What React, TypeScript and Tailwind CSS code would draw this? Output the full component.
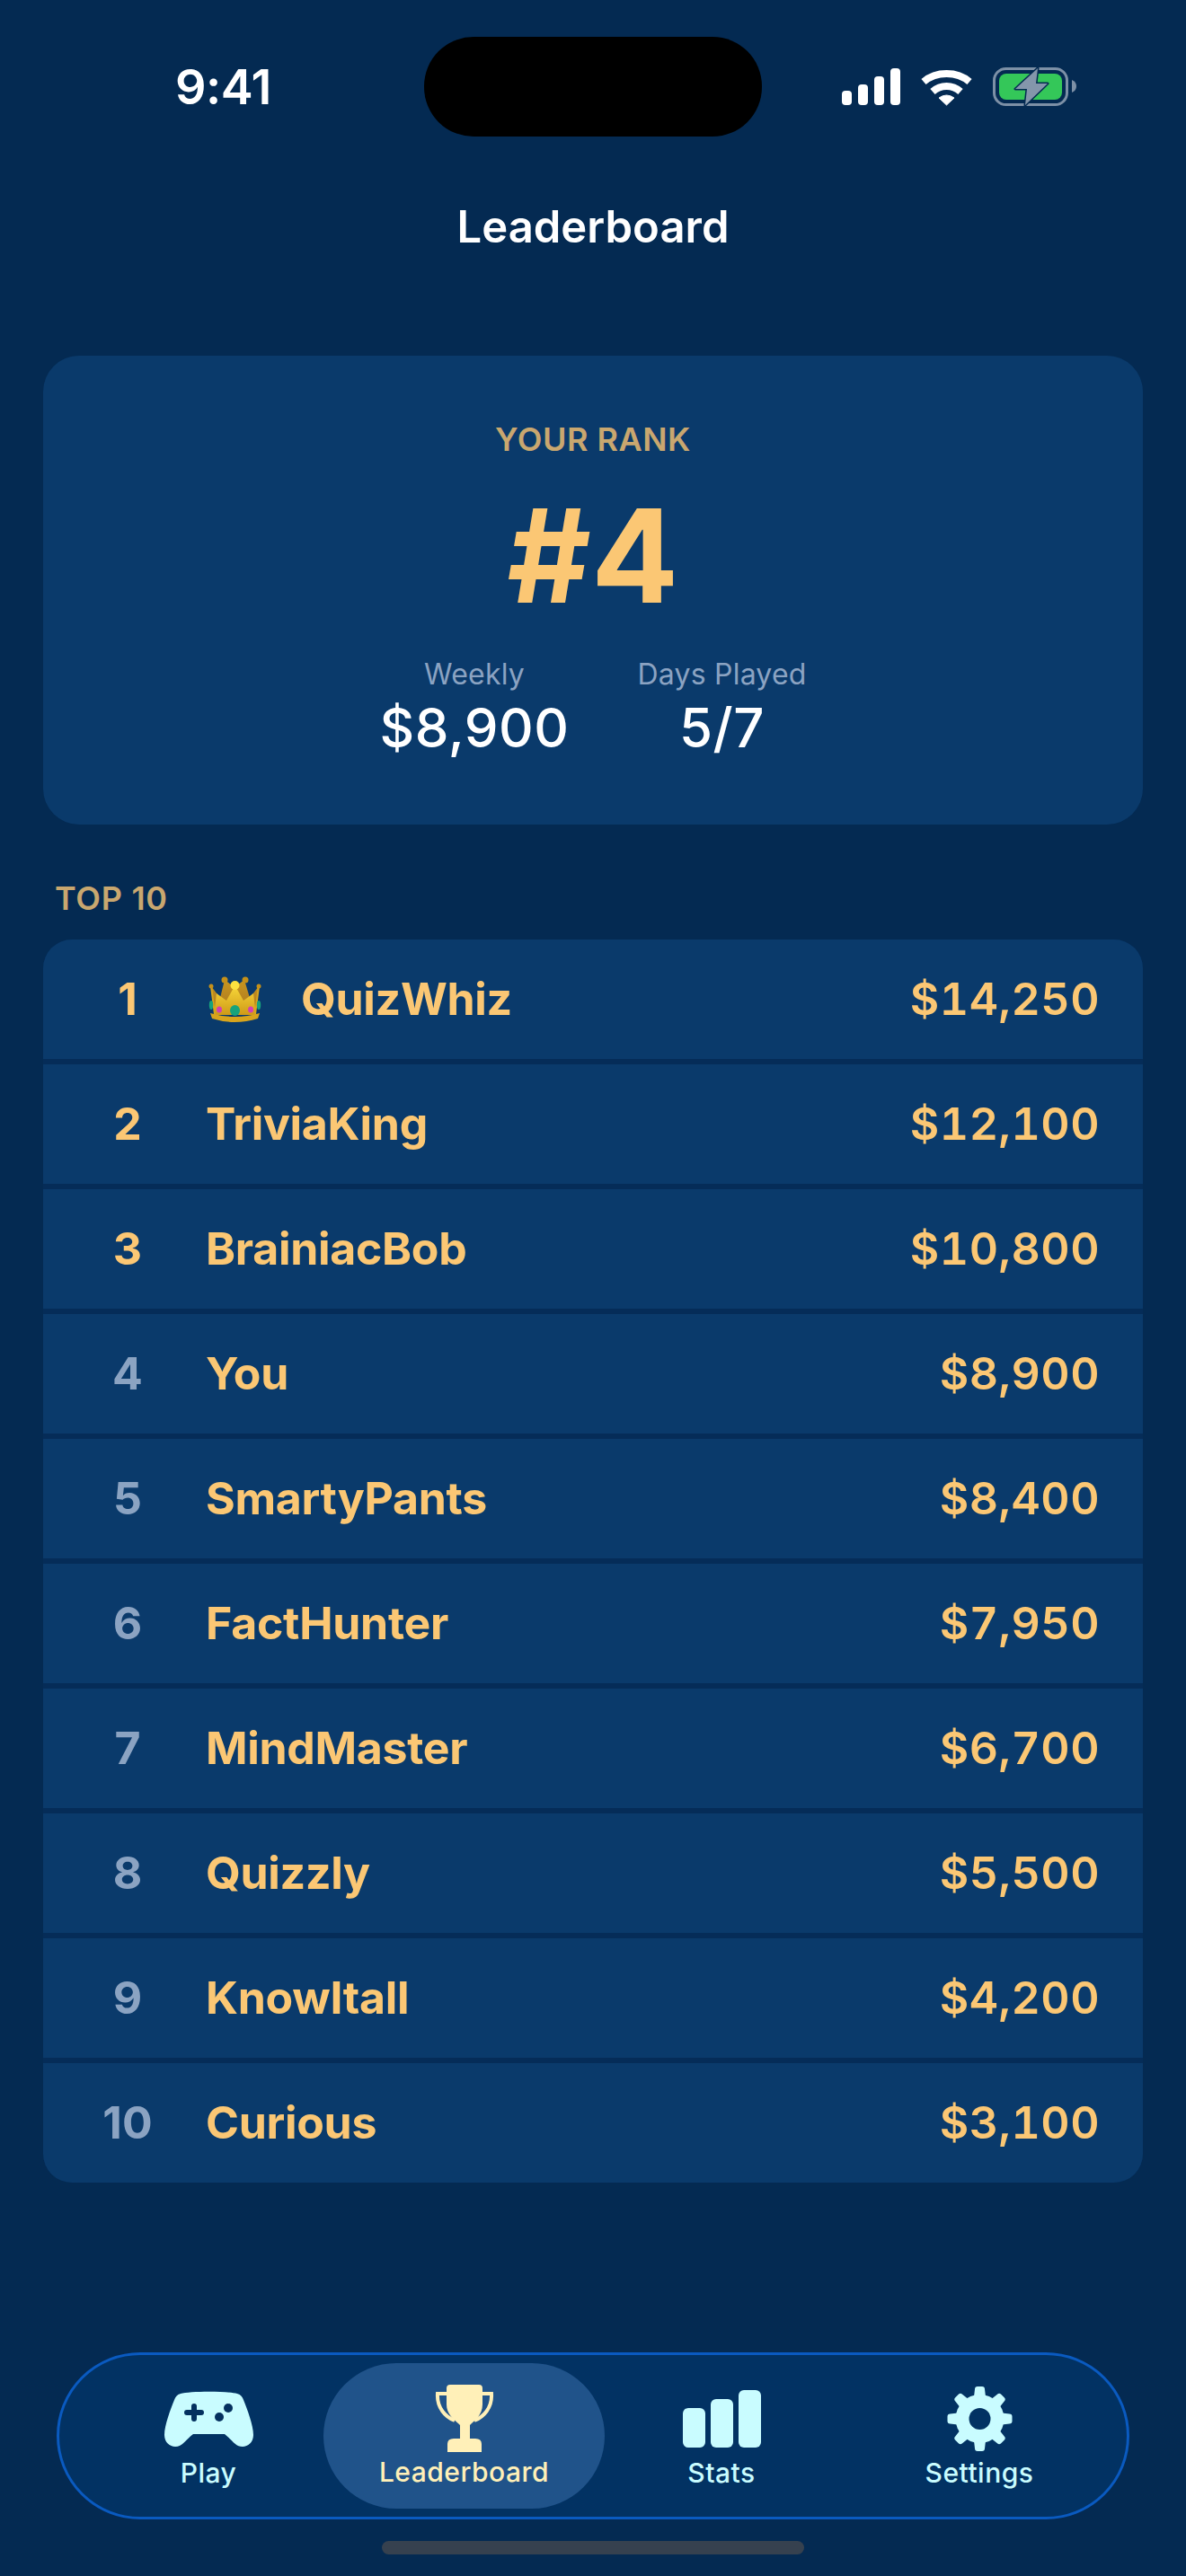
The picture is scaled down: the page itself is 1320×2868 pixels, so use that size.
const rows = [
  { rank: 1, name: "QuizWhiz", amount: "$14,250", top: true, crown: true },
  { rank: 2, name: "TriviaKing", amount: "$12,100", top: true },
  { rank: 3, name: "BrainiacBob", amount: "$10,800", top: true },
  { rank: 4, name: "You", amount: "$8,900" },
  { rank: 5, name: "SmartyPants", amount: "$8,400" },
  { rank: 6, name: "FactHunter", amount: "$7,950" },
  { rank: 7, name: "MindMaster", amount: "$6,700" },
  { rank: 8, name: "Quizzly", amount: "$5,500" },
  { rank: 9, name: "KnowItall", amount: "$4,200" },
  { rank: 10, name: "Curious", amount: "$3,100" },
];

function SignalIcon() {
  return (
    <svg width="65" height="41" viewBox="0 0 65 41" fill="#fff">
      <rect x="0" y="25" width="11" height="16" rx="4" />
      <rect x="18" y="18" width="11" height="23" rx="4" />
      <rect x="36" y="9" width="11" height="32" rx="4" />
      <rect x="54" y="0" width="11" height="41" rx="4" />
    </svg>
  );
}

function WifiIcon() {
  return (
    <svg width="57" height="42" viewBox="0 0 57 42" fill="none" stroke="#fff" strokeWidth="8">
      <path d="M3 15C17 3 40 3 54 15" />
      <path d="M13 26C22 18 35 18 44 26" />
      <path d="M28.5 41L20 33Q28.5 27 37 33Z" fill="#fff" stroke="#fff" strokeWidth="1" strokeLinejoin="round" />
    </svg>
  );
}

function BatteryIcon() {
  return (
    <svg width="93" height="43" viewBox="0 0 93 43" fill="none">
      <rect x="1.5" y="1.5" width="81" height="40" rx="13" stroke="#7d90a6" strokeWidth="3" />
      <rect x="7" y="7" width="70" height="29" rx="8" fill="#34c759" />
      <path d="M88 14Q93 16 93 21Q93 26 88 28Z" fill="#7d90a6" />
      <path
        d="M50 1L25 24H38L36 42L61 18H48Z"
        fill="#8496ab"
        stroke="#042a52"
        strokeWidth="3"
        strokeLinejoin="round"
        paintOrder="stroke"
      />
    </svg>
  );
}

function GamepadIcon() {
  return (
    <svg width="99" height="62" viewBox="0 0 99 62">
      <path
        d="M18 3C28 0 71 0 81 3C85 4 87 7 88 10C92 20 99 38 99 49C99 57 93 62 87 62C79 62 75 54 67 48H32C24 54 20 62 12 62C6 62 0 57 0 49C0 38 7 20 11 10C12 7 14 4 18 3Z"
        fill="#c9fcff"
      />
      <path d="M33 17V31M25 24H41" stroke="#04305f" strokeWidth="6" strokeLinecap="round" />
      <circle cx="71" cy="19" r="5" fill="#04305f" />
      <circle cx="61" cy="29" r="5" fill="#04305f" />
    </svg>
  );
}

function TrophyIcon() {
  return (
    <svg width="66" height="75" viewBox="0 0 66 75">
      <path d="M13 10H3C2 26 12 36 22 40M53 10H63C64 26 54 36 44 40" fill="none" stroke="#fff0b8" strokeWidth="4" />
      <path
        d="M13 4Q13 0 17 0H49Q53 0 53 4V22C53 34 44 40 39 45V60H45Q52 60 52 66V75H14V66Q14 60 21 60H28V45C23 40 13 34 13 22Z"
        fill="#fff0b8"
      />
    </svg>
  );
}

function StatsIcon() {
  return (
    <svg width="87" height="64" viewBox="0 0 87 64" fill="#c9fcff">
      <rect x="0" y="20" width="25" height="44" rx="6" />
      <rect x="31" y="10" width="25" height="54" rx="6" />
      <rect x="62" y="0" width="25" height="64" rx="6" />
    </svg>
  );
}

function GearIcon() {
  return (
    <svg width="73" height="72" viewBox="0 0 73 72">
      <g fill="#c9fcff">
        <circle cx="36.5" cy="36" r="27" />
        {[0, 45, 90, 135, 180, 225, 270, 315].map((angle) => (
          <path
            key={angle}
            d="M29 20L31 3Q31 0 34 0H39Q42 0 42 3L44 20Z"
            transform={`rotate(${angle} 36.5 36)`}
          />
        ))}
      </g>
      <circle cx="36.5" cy="36" r="12" fill="#023263" />
    </svg>
  );
}

function CrownIcon() {
  return (
    <svg width="59" height="51" viewBox="0 0 59 51">
      <defs>
        <linearGradient id="crownGold" x1="0" y1="0" x2="0" y2="1">
          <stop offset="0" stopColor="#f8d83a" />
          <stop offset="1" stopColor="#cf9a18" />
        </linearGradient>
        <linearGradient id="crownBack" x1="0" y1="0" x2="0" y2="1">
          <stop offset="0" stopColor="#c8961f" />
          <stop offset="1" stopColor="#a87420" />
        </linearGradient>
      </defs>
      <path d="M3 11L7 42H52L56 11L46 24L40 4L29 12L18 4L13 24Z" fill="url(#crownBack)" />
      <path d="M29.5 10L39 27L50 19L53 43H6L9 19L20 27Z" fill="url(#crownGold)" />
      <path d="M3 11L7 42M56 11L52 42" stroke="#d6a41f" strokeWidth="2" />
      <circle cx="18" cy="4" r="3.5" fill="#c4901a" />
      <circle cx="41" cy="4" r="3.5" fill="#c4901a" />
      <circle cx="3" cy="11" r="2.5" fill="#c4901a" />
      <circle cx="56" cy="11" r="2.5" fill="#c4901a" />
      <circle cx="29.5" cy="10" r="5" fill="#fde23f" />
      <path d="M2 41Q29.5 49 57 41L55 47Q29.5 55 4 47Z" fill="#d8a41c" />
      <ellipse cx="29.5" cy="38" rx="5.5" ry="6" fill="#17a37c" />
      <ellipse cx="12" cy="37" rx="3" ry="3.5" fill="#d33fb2" />
      <ellipse cx="47" cy="37" rx="3" ry="3.5" fill="#d33fb2" />
      <ellipse cx="3" cy="32" rx="2.2" ry="5" fill="#17a37c" />
      <ellipse cx="56" cy="32" rx="2.2" ry="5" fill="#17a37c" />
    </svg>
  );
}

export default function App() {
  return (
    <div className="w-[1320px] h-[2868px] flex flex-col bg-[#042a52] font-['Inter',sans-serif] text-white overflow-hidden">
      <div className="flex items-center mt-[41px] h-[111px]">
        <div className="w-[472px] pl-[195px] text-[54px] leading-none font-semibold tracking-[-0.5px]">9:41</div>
        <div className="w-[376px] h-[111px] rounded-[55px] bg-black" />
        <div className="w-[472px] pl-[89px] flex items-center gap-[23px]">
          <SignalIcon />
          <WifiIcon />
          <BatteryIcon />
        </div>
      </div>

      <h1 className="mt-[71px] h-[60px] leading-[60px] text-center text-[49px] font-semibold">Leaderboard</h1>

      <section className="mt-[113px] mx-[48px] h-[522px] rounded-[40px] bg-[#0a3a6b] flex flex-col items-center pt-[73px]">
        <p className="text-[36px] leading-[40px] font-semibold text-[#c9a76f] tracking-[0.5px]">YOUR RANK</p>
        <p className="mt-[25px] text-[144px] leading-[170px] font-bold text-[#fbc774]">#4</p>
        <div className="flex justify-center gap-[76px] mt-[27px]">
          <div className="flex flex-col items-center">
            <span className="text-[32px] leading-[40px] text-[#8ba3c2] tracking-[0.2px]">Weekly</span>
            <span className="mt-[4px] text-[60px] leading-[70px] font-medium tracking-[0.5px]">$8,900</span>
          </div>
          <div className="flex flex-col items-center">
            <span className="text-[32px] leading-[40px] text-[#8ba3c2] tracking-[0.2px]">Days Played</span>
            <span className="mt-[4px] text-[60px] leading-[70px] font-medium tracking-[0.5px]">5/7</span>
          </div>
        </div>
      </section>

      <h2 className="mt-[60px] mb-[24px] ml-[61px] text-[36px] leading-[44px] font-semibold text-[#c9a76f] tracking-[0.7px]">TOP 10</h2>

      <div className="mx-[48px] rounded-[32px] overflow-hidden flex flex-col gap-[6px] bg-[#052c58]">
        {rows.map((row) => (
          <div key={row.rank} className="h-[133px] shrink-0 flex items-center bg-[#0a3a6b] pl-[33px] pr-[48px]">
            <span
              className={`w-[122px] text-center text-[50px] font-bold ${row.top ? "text-[#fbc774]" : "text-[#8ba3c2]"}`}
            >
              {row.rank}
            </span>
            <span className="ml-[26px] flex items-center text-[50px] font-bold text-[#fbc774] tracking-[-0.3px]">
              {row.crown && (
                <span className="ml-[3px] mr-[44px]">
                  <CrownIcon />
                </span>
              )}
              {row.name}
            </span>
            <span className="ml-auto text-[50px] font-semibold text-[#fbc774] tabular-nums tracking-[0.5px]">{row.amount}</span>
          </div>
        ))}
      </div>

      <nav className="mt-[189px] mx-[63px] h-[186px] shrink-0 rounded-[93px] border-[3px] border-[#0a5ac0] bg-[#023263] flex items-center">
        <div className="ml-[50px] w-[232px] flex flex-col items-center text-[#c9fcff]">
          <div className="h-[80px] flex items-center"><GamepadIcon /></div>
          <span className="mt-[2px] text-[30px] leading-[36px] font-medium tracking-[0.5px]">Play</span>
        </div>
        <div className="ml-[12px] w-[313px] h-[162px] rounded-[81px] bg-[#20538a] flex flex-col items-center justify-center text-[#fff0b8]">
          <div className="h-[80px] flex items-center -mt-[2px]"><TrophyIcon /></div>
          <span className="mt-[2px] text-[30px] leading-[36px] font-medium tracking-[0.5px]">Leaderboard</span>
        </div>
        <div className="ml-[10px] w-[240px] flex flex-col items-center text-[#c9fcff]">
          <div className="h-[80px] flex items-center"><StatsIcon /></div>
          <span className="mt-[2px] text-[30px] leading-[36px] font-medium tracking-[0.5px]">Stats</span>
        </div>
        <div className="ml-[47px] w-[240px] flex flex-col items-center text-[#c9fcff]">
          <div className="h-[80px] flex items-center"><GearIcon /></div>
          <span className="mt-[2px] text-[30px] leading-[36px] font-medium tracking-[0.5px]">Settings</span>
        </div>
      </nav>

      <div className="mt-[24px] ml-[425px] w-[470px] h-[15px] rounded-full bg-[#36414f] shrink-0" />
    </div>
  );
}
